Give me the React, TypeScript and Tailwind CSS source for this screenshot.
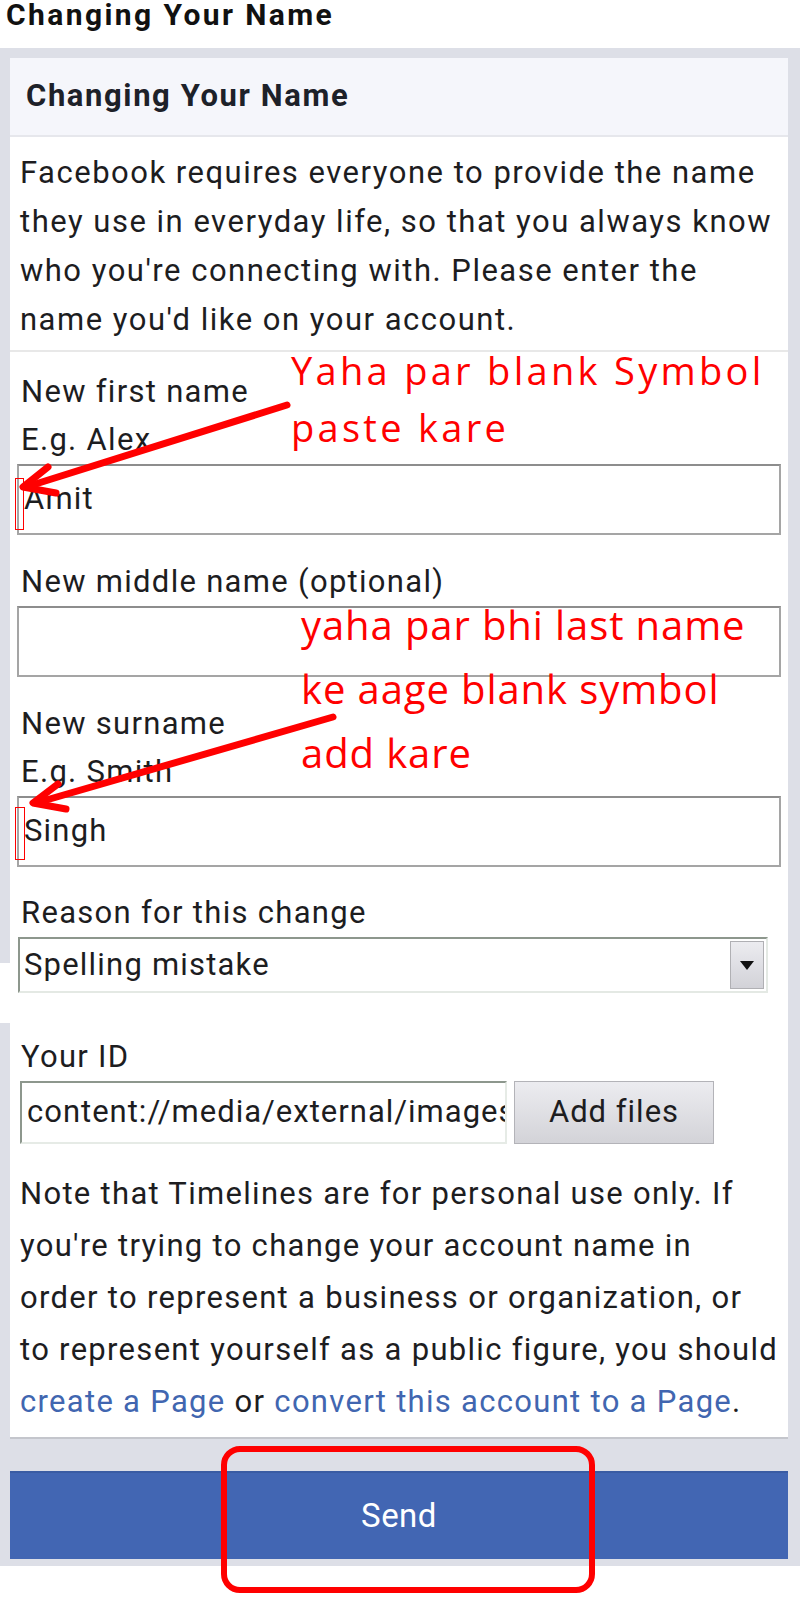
import React from "react";

const Label = ({ children, className = "" }: { children: React.ReactNode; className?: string }) => (
  <p className={"px-[11px] text-[31px] tracking-[1.3px] leading-[48px] text-[#1d1d1f] " + className}>{children}</p>
);

const TextBox = ({ value, className = "" }: { value?: string; className?: string }) => (
  <div
    className={
      "mx-[7px] h-[71px] border-2 border-[#a5a5a5] border-t-[#8d8d8d] bg-white flex items-center px-[5px] text-[31px] tracking-[1.2px] text-[#1d1d1f] " +
      className
    }
  >
    {value}
  </div>
);

const App = () => {
  return (
    <div className="relative w-[800px] min-h-[1600px] bg-white font-['Roboto',sans-serif] overflow-hidden">
      <div className="h-[48px] px-[6px] text-[30px] tracking-[2.4px] font-bold leading-[30px] text-[#111]">
        Changing Your Name
      </div>

      <div className="bg-[#dddfe7] pt-[10px] pl-[10px] pr-[12px] pb-[7px]">
        <div className="bg-white border-b-2 border-[#c4c6cc]">
          <div className="h-[79px] bg-[#f5f6fb] border-b-2 border-[#e6e7ec] flex items-center px-[16px]">
            <h2 className="text-[31px] tracking-[1.6px] font-bold text-[#1d2129]">Changing Your Name</h2>
          </div>

          <div className="pt-[11px] pb-[6px] px-[10px] border-b-2 border-[#e8e8e8]">
            <p className="text-[31px] tracking-[1.5px] leading-[49px] text-[#1d1d1f] whitespace-nowrap">
              Facebook requires everyone to provide the name
              <br />
              they use in everyday life, so that you always know
              <br />
              who you're connecting with. Please enter the
              <br />
              name you'd like on your account.
            </p>
          </div>

          <div className="pt-[16px]">
            <Label>New first name</Label>
            <Label>E.g. Alex</Label>
            <TextBox value="Amit" />

            <Label className="mt-[23px]">New middle name (optional)</Label>
            <TextBox />

            <Label className="mt-[23px]">New surname</Label>
            <Label>E.g. Smith</Label>
            <TextBox value="Singh" />

            <Label className="mt-[22px]">Reason for this change</Label>
            <div className="ml-[8px] mr-[20px] h-[56px] flex border-2 border-[#e4e9e4] border-t-[#8d978d] border-l-[#8d978d] bg-white">
              <div className="flex-1 flex items-center px-[4px] text-[31px] tracking-[1.2px] text-[#1d1d1f]">
                Spelling mistake
              </div>
              <div className="w-[34px] my-[2px] mr-[2px] border border-[#b0b0b4] bg-gradient-to-b from-[#ececf0] to-[#d2d2d8] flex items-center justify-center">
                <svg width="14" height="9" viewBox="0 0 14 9">
                  <path d="M0 0 L14 0 L7 9 Z" fill="#111" />
                </svg>
              </div>
            </div>

            <Label className="mt-[40px]">Your ID</Label>
            <div className="flex items-stretch gap-[7px] px-[10px] h-[63px]">
              <div className="w-[487px] border-2 border-[#e6ebe6] border-t-[#8d978d] border-l-[#8d978d] bg-white flex items-center pl-[5px] overflow-hidden whitespace-nowrap text-[31px] tracking-[1px] text-[#1d1d1f]">
                content://media/external/images/media/12345
              </div>
              <div className="w-[200px] border border-[#b3b3b8] bg-gradient-to-b from-[#ececf0] to-[#d3d3d8] flex items-center justify-center text-[31px] tracking-[1px] text-[#1d1d1f]">
                Add files
              </div>
            </div>

            <p className="mt-[24px] px-[10px] pb-[9px] text-[31px] tracking-[1.3px] leading-[52px] text-[#1d1d1f] whitespace-nowrap">
              Note that Timelines are for personal use only. If
              <br />
              you're trying to change your account name in
              <br />
              order to represent a business or organization, or
              <br />
              to represent yourself as a public figure, you should
              <br />
              <span className="text-[#4166b0]">create a Page</span> or{" "}
              <span className="text-[#4166b0]">convert this account to a Page</span>.
            </p>
          </div>
        </div>

        <button className="mt-[32px] w-full h-[88px] bg-[#4266b3] border-t-2 border-[#3a5ca3] flex items-center justify-center text-[33px] tracking-[0.5px] text-white">
          Send
        </button>
      </div>

      {/* white patch from the edited screenshot */}
      <div className="absolute left-0 top-[963px] w-[10px] h-[60px] bg-white" />

      {/* annotations */}
      <div className="absolute left-[291px] top-[342px] font-['Open_Sans',sans-serif] text-[38px] tracking-[3.3px] leading-[57px] text-[#ff0000] whitespace-nowrap">
        Yaha par blank Symbol
        <br />
        paste kare
      </div>
      <div className="absolute left-[301px] top-[593px] font-['Open_Sans',sans-serif] text-[40px] tracking-[0.9px] leading-[64px] text-[#ff0000] whitespace-nowrap">
        yaha par bhi last name
        <br />
        ke aage blank symbol
        <br />
        add kare
      </div>

      <div className="absolute left-[15px] top-[478px] w-[9px] h-[52px] border border-[#ff0000]" />
      <div className="absolute left-[15px] top-[807px] w-[10px] h-[53px] border border-[#ff0000]" />

      <svg className="absolute left-0 top-0 pointer-events-none" width="800" height="1600">
        <g stroke="#ff0000" strokeWidth="7" strokeLinecap="round" strokeLinejoin="round" fill="none">
          <path d="M287 405 L26 487" />
          <path d="M48 467 L23 487 L56 493" />
          <path d="M333 717 L36 803" />
          <path d="M58 784 L33 803 L66 809" />
        </g>
        <rect x="224" y="1449" width="368" height="141" rx="16" fill="none" stroke="#ff0000" strokeWidth="6" />
      </svg>
    </div>
  );
};

export default App;
